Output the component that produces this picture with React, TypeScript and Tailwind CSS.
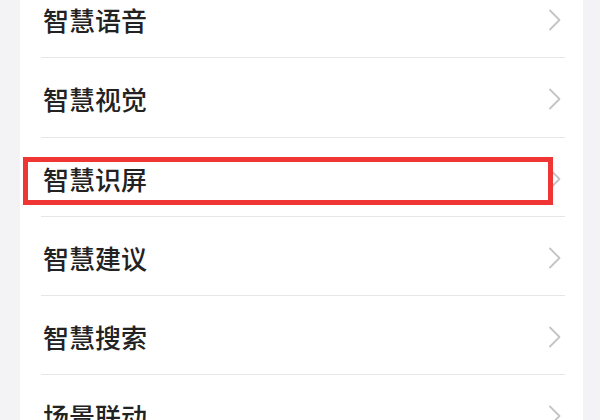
import React from "react";

const items = ["智慧语音", "智慧视觉", "智慧识屏", "智慧建议", "智慧搜索", "场景联动"];

function Chevron() {
  return (
    <svg width="14" height="22" viewBox="0 0 14 22" className="shrink-0">
      <path d="M2 1.5 L11.5 11 L2 20.5" fill="none" stroke="#c4c4c4" strokeWidth="1.8" strokeLinecap="round" strokeLinejoin="round" />
    </svg>
  );
}

export default function App() {
  return (
    <div className="w-[600px] h-[420px] overflow-hidden bg-[#f3f3f5]" style={{ fontFamily: '"Noto Sans CJK SC", "Noto Sans", sans-serif' }}>
      <div className="ml-[20px] w-[563px] bg-white mt-[-21px]">
        {items.map((t, i) => (
          <div key={t} className="relative">
            <div className="h-[78.25px] flex items-center justify-between pl-[23px] pr-[21px] pt-[4px]">
              <span className="text-[26px] leading-none font-medium text-[#222222] tracking-[0px]">{t}</span>
              <Chevron />
            </div>
            {i < items.length - 1 && <div className="ml-[21px] mr-[18px] h-px bg-[#e6e6e6]" />}
            {i === 2 && (
              <div className="absolute left-[3px] top-[19px] w-[530px] h-[48px] border-[5px] border-[#f03535]" />
            )}
          </div>
        ))}
      </div>
    </div>
  );
}
